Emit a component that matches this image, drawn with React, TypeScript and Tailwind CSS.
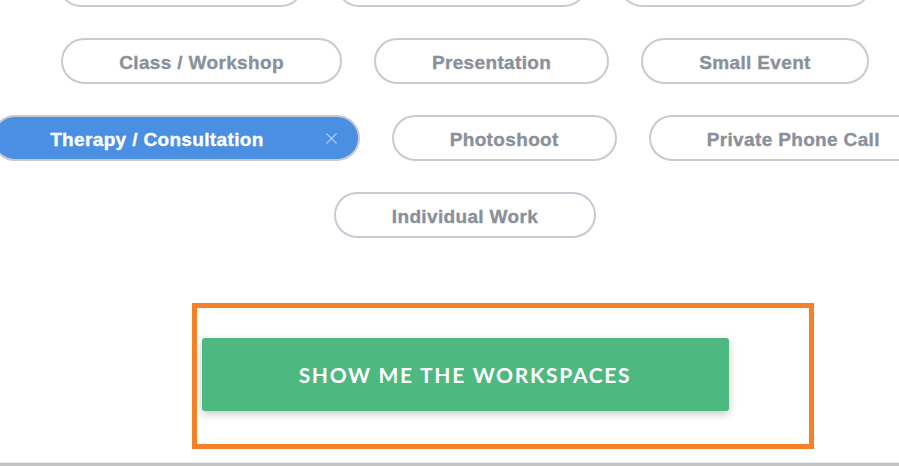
import { X } from 'lucide-react';

interface PillProps {
   label: string;
   selected?: boolean;
}

const Pill = ({ label, selected }: PillProps) => {
   if (selected) {
      return (
         <button className="flex items-center shrink-0 h-[46px] pt-[3px] pl-[56px] pr-[17px] rounded-full border-2 border-[#c7cad3] bg-[#4a8fe2] text-white text-[19px] leading-[22px] font-bold tracking-[0.35px] [-webkit-text-stroke:0.35px_currentColor] whitespace-nowrap">
            {label}
            <X className="ml-[58px] -mt-[3px] text-white/55" size={19} strokeWidth={1.4} />
         </button>
      );
   }
   return (
      <button className="shrink-0 h-[46px] pt-[3px] px-[56px] rounded-full border-2 border-[#c7cad3] bg-white text-[#8a909b] text-[19px] leading-[22px] font-bold tracking-[0.35px] [-webkit-text-stroke:0.35px_currentColor] whitespace-nowrap">
         {label}
      </button>
   );
};

const rows = [
   ['Team Meeting', 'Client Meeting', 'Job Interviews'],
   ['Class / Workshop', 'Presentation', 'Small Event'],
   ['Therapy / Consultation', 'Photoshoot', 'Private Phone Call'],
   ['Individual Work'],
];

export default function App() {
   return (
      <div className="relative w-[899px] h-[466px] overflow-hidden bg-white" style={{ fontFamily: '"Liberation Sans", Arial, sans-serif' }}>
         <div className="w-[930px] -mt-[39px] flex flex-col items-center">
            <div className="w-full flex flex-col gap-[31px]">
               {rows.map((row, i) => (
                  <div key={i} className="w-full flex justify-center gap-8">
                     {row.map((label) => (
                        <Pill key={label} label={label} selected={label === 'Therapy / Consultation'} />
                     ))}
                  </div>
               ))}
            </div>

            <div className="pt-[100px] pb-[51px] flex justify-center">
               <button
                  className="w-[527px] h-[73px] rounded-[3px] bg-[#4db880] text-white text-[21px] font-bold tracking-[1.7px] shadow-[0_3px_8px_rgba(0,0,0,0.22)]"
                  style={{ fontFamily: 'Lato, "Open Sans", sans-serif' }}
               >
                  SHOW ME THE WORKSPACES
               </button>
            </div>
         </div>

         <div className="absolute left-0 right-0 bottom-0 h-[4px] border-t border-[#ececec] bg-[#c4c4c4]" />

         {/* highlight box */}
         <div className="absolute left-[192px] top-[303px] w-[622px] h-[146px] border-[5px] border-[#f58026] pointer-events-none" />
      </div>
   );
}
